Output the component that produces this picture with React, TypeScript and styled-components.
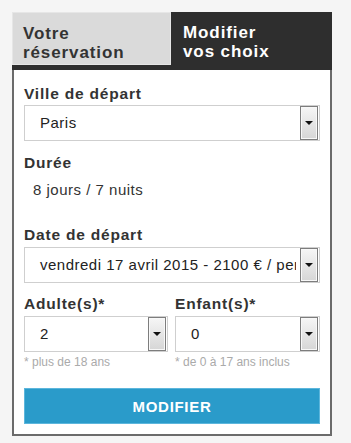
import styled, { createGlobalStyle } from 'styled-components'

const GlobalStyle = createGlobalStyle`
  body {
    margin: 0;
    background: #f5f5f5;
    font-family: "Liberation Sans", Arial, sans-serif;
  }
`

const Page = styled.div`
  padding: 12px 0 0 12px;
`

const Widget = styled.div`
  width: 320px;
`

const Tabs = styled.div`
  display: flex;
  height: 58px;
  background: #2e2e2e;
`

const Tab = styled.div<{ active?: boolean }>`
  box-sizing: border-box;
  width: ${({ active }) => (active ? '161px' : '159px')};
  height: ${({ active }) => (active ? '58px' : '53px')};
  padding: 11px 6px 0 ${({ active }) => (active ? '12px' : '10px')};
  background: ${({ active }) => (active ? 'transparent' : '#dadada')};
  border: ${({ active }) => (active ? 'none' : '1px solid #e6e6e6')};
  color: ${({ active }) => (active ? '#fff' : '#333')};
  font-size: 17px;
  font-weight: bold;
  letter-spacing: 0.9px;
  line-height: 19px;
`

const Panel = styled.div`
  border: 2px solid #6b6b6b;
  border-top: none;
  background: #fff;
  padding: 15px 10px 10px 10px;
`

const Label = styled.div<{ top?: number }>`
  margin-top: ${({ top }) => top ?? 0}px;
  color: #333;
  font-size: 15.5px;
  font-weight: bold;
  letter-spacing: 0.8px;
  line-height: 18px;
`

const Select = styled.div<{ top?: number }>`
  box-sizing: border-box;
  display: flex;
  align-items: stretch;
  margin-top: ${({ top }) => top ?? 3}px;
  height: 36px;
  border: 1px solid #cfcfcf;
  background: #fff;
`

const SelectText = styled.div`
  flex: 1;
  overflow: hidden;
  white-space: nowrap;
  padding-left: 15px;
  color: #222;
  font-size: 15px;
  letter-spacing: 0.5px;
  line-height: 34px;
`

const Arrow = styled.div`
  box-sizing: border-box;
  width: 18px;
  margin: 0 1px 0 4px;
  border: 1px solid #7d7d7d;
  box-shadow: inset 0 0 0 1px #f8f8f8;
  background: linear-gradient(#f6f6f6, #d6d6d6);
  display: flex;
  align-items: center;
  justify-content: center;

  &:after {
    content: '';
    border-left: 4px solid transparent;
    border-right: 4px solid transparent;
    border-top: 4px solid #111;
  }
`

const Value = styled.div`
  margin-top: 9px;
  padding-left: 9px;
  color: #333;
  font-size: 15px;
  letter-spacing: 0.5px;
  line-height: 18px;
`

const Columns = styled.div`
  display: grid;
  grid-template-columns: 144px 145px;
  column-gap: 7px;
  margin-top: 12px;
`

const Hint = styled.div`
  margin-top: 3px;
  color: #aaa;
  font-size: 12px;
  line-height: 14px;
`

const Button = styled.button`
  display: block;
  box-sizing: border-box;
  width: 100%;
  height: 36px;
  margin-top: 19px;
  border: 1px solid #5cb6dc;
  background: #2a9bca;
  color: #fff;
  font-family: inherit;
  font-size: 15px;
  font-weight: bold;
  letter-spacing: 0.7px;
  cursor: pointer;
`

export default function App() {
  return (
    <>
      <GlobalStyle />
      <Page>
        <Widget>
          <Tabs>
            <Tab>
              Votre
              <br />
              réservation
            </Tab>
            <Tab active>
              Modifier
              <br />
              vos choix
            </Tab>
          </Tabs>
          <Panel>
            <Label>Ville de départ</Label>
            <Select top={2}>
              <SelectText>Paris</SelectText>
              <Arrow />
            </Select>
            <Label top={13}>Durée</Label>
            <Value>8 jours / 7 nuits</Value>
            <Label top={27}>Date de départ</Label>
            <Select>
              <SelectText>vendredi 17 avril 2015 - 2100 € / personne</SelectText>
              <Arrow />
            </Select>
            <Columns>
              <div>
                <Label>Adulte(s)*</Label>
                <Select>
                  <SelectText>2</SelectText>
                  <Arrow />
                </Select>
                <Hint>* plus de 18 ans</Hint>
              </div>
              <div>
                <Label>Enfant(s)*</Label>
                <Select>
                  <SelectText>0</SelectText>
                  <Arrow />
                </Select>
                <Hint>* de 0 à 17 ans inclus</Hint>
              </div>
            </Columns>
            <Button>MODIFIER</Button>
          </Panel>
        </Widget>
      </Page>
    </>
  )
}
